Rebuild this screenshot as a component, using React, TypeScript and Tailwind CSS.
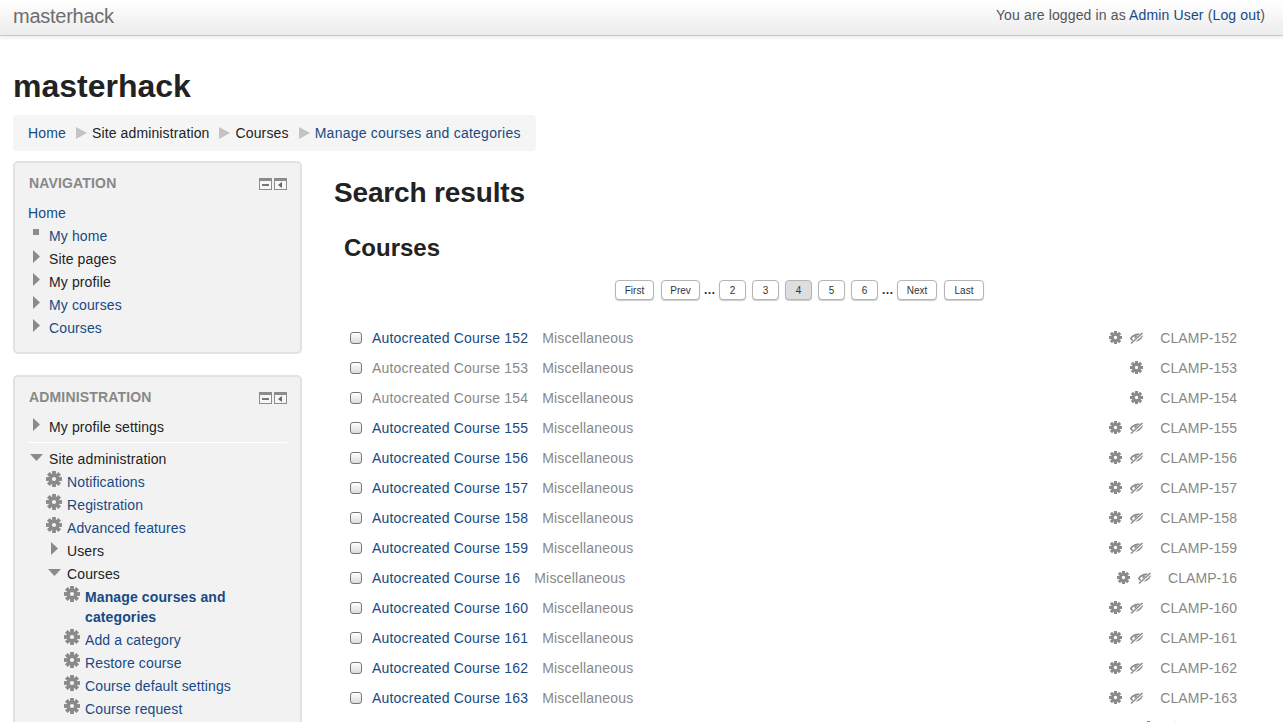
import React from 'react';

const LINK = 'text-[#174a85]';

type IconKind = 'none' | 'bullet' | 'closed' | 'open' | 'gear';

interface TreeItem {
  label: string;
  level: 1 | 2 | 3 | 0;
  icon: IconKind;
  link?: boolean;
  bold?: boolean;
}

const navItems: TreeItem[] = [
  { label: 'Home', level: 0, icon: 'none', link: true },
  { label: 'My home', level: 1, icon: 'bullet', link: true },
  { label: 'Site pages', level: 1, icon: 'closed' },
  { label: 'My profile', level: 1, icon: 'closed' },
  { label: 'My courses', level: 1, icon: 'closed', link: true },
  { label: 'Courses', level: 1, icon: 'closed', link: true },
];

const adminItems: TreeItem[] = [
  { label: 'Site administration', level: 1, icon: 'open' },
  { label: 'Notifications', level: 2, icon: 'gear', link: true },
  { label: 'Registration', level: 2, icon: 'gear', link: true },
  { label: 'Advanced features', level: 2, icon: 'gear', link: true },
  { label: 'Users', level: 2, icon: 'closed' },
  { label: 'Courses', level: 2, icon: 'open' },
  { label: 'Manage courses and categories', level: 3, icon: 'gear', link: true, bold: true },
  { label: 'Add a category', level: 3, icon: 'gear', link: true },
  { label: 'Restore course', level: 3, icon: 'gear', link: true },
  { label: 'Course default settings', level: 3, icon: 'gear', link: true },
  { label: 'Course request', level: 3, icon: 'gear', link: true },
];

const courses = [
  { num: '152', visible: true },
  { num: '153', visible: false },
  { num: '154', visible: false },
  { num: '155', visible: true },
  { num: '156', visible: true },
  { num: '157', visible: true },
  { num: '158', visible: true },
  { num: '159', visible: true },
  { num: '16', visible: true },
  { num: '160', visible: true },
  { num: '161', visible: true },
  { num: '162', visible: true },
  { num: '163', visible: true },
];

// Chunky eight tooth gear, the hole stays see-through
function Gear({ size, className }: { size: number; className?: string }) {
  return (
    <svg className={className} width={size} height={size} viewBox="0 0 16 16" fill="currentColor">
      {[0, 45, 90, 135, 180, 225, 270, 315].map((a) => (
        <rect key={a} x="6.1" y="0" width="3.8" height="4" transform={`rotate(${a} 8 8)`} />
      ))}
      <circle cx="8" cy="8" r="3.7" fill="none" stroke="currentColor" strokeWidth="3.2" />
    </svg>
  );
}

function EyeOff() {
  return (
    <svg width="13" height="12" viewBox="0 0 13 12" fill="none" stroke="currentColor">
      <path d="M0.8 6.5 C3 3 6.5 2 10.5 2.5 C11.5 2.7 12 3.2 12.2 3.8 C10.5 8 6 10 2.5 8.5 Z" strokeWidth="1.7" />
      <circle cx="6.4" cy="5.6" r="2" fill="currentColor" stroke="none" />
      <path d="M1.5 11.5 L12.5 1.5" stroke="#ffffff" strokeWidth="2.8" />
      <path d="M1 11.5 L12.5 1" strokeWidth="1.4" />
    </svg>
  );
}

function TreeIcon({ kind }: { kind: IconKind }) {
  if (kind === 'bullet') return <span className="block w-[6px] h-[6px] ml-[5px] mt-[3px] bg-[#8c8c8c]" />;
  if (kind === 'closed') {
    return (
      <svg className="block ml-[5px] mt-[1px]" width="7" height="13" viewBox="0 0 7 13">
        <path d="M0 0 L7 6.5 L0 13 Z" fill="#8a8a8a" />
      </svg>
    );
  }
  if (kind === 'open') {
    return (
      <svg className="block ml-[2px] mt-[5px]" width="13" height="7" viewBox="0 0 13 7">
        <path d="M0 0 H13 L6.5 7 Z" fill="#8a8a8a" />
      </svg>
    );
  }
  if (kind === 'gear') return <Gear size={16} className="block mt-[-1px] text-[#8a8a8a]" />;
  return null;
}

function TreeRow({ item }: { item: TreeItem }) {
  const indent =
    item.level === 3 ? 'pl-[36px]' : item.level === 2 ? 'pl-[18px]' : '';
  return (
    <div className={`flex py-[1.5px] leading-5 tracking-[0.12px] ${indent}`}>
      {item.level > 0 && (
        <span className="w-[21px] shrink-0">
          <TreeIcon kind={item.icon} />
        </span>
      )}
      <span className={`${item.link ? LINK : 'text-[#222]'} ${item.bold ? 'font-bold' : ''}`}>{item.label}</span>
    </div>
  );
}

function BlockControls() {
  return (
    <div className="flex gap-[2px] mt-[1px]">
      <span className="flex items-center justify-center w-[13px] h-[12px] border border-t-[3px] border-[#8c8c8c] bg-[#f7f7f7]">
        <span className="w-[7px] h-[2px] bg-[#777]" />
      </span>
      <span className="flex items-center justify-center w-[13px] h-[12px] border border-t-[3px] border-[#8c8c8c] bg-[#f7f7f7]">
        <svg width="5" height="6" viewBox="0 0 5 6">
          <path d="M4 0 V6 L0 3 Z" fill="#666" />
        </svg>
      </span>
    </div>
  );
}

function Block({ title, children, className }: { title: string; children: React.ReactNode; className?: string }) {
  return (
    <div className={`border-2 border-[#e2e2e2] rounded-[5px] bg-[#f2f2f2] pt-[10px] pb-[13px] pl-[13px] pr-[13px] ${className ?? ''}`}>
      <div className="flex items-center justify-between h-5 mb-[8px]">
        <h2 className="pl-[1px] text-[14px] font-bold text-[#888] uppercase">{title}</h2>
        <BlockControls />
      </div>
      {children}
    </div>
  );
}

function Crumb() {
  return (
    <svg className="ml-[10px] mr-[5px]" width="11" height="12" viewBox="0 0 11 12">
      <path d="M0 0 L11 6 L0 12 Z" fill="#c4c4c4" />
    </svg>
  );
}

function PageButton({ label, className, active }: { label: string; className: string; active?: boolean }) {
  return (
    <span
      className={`flex items-center justify-center h-[20px] rounded-[4px] border border-[#b5b5b5] shadow-[0_1px_1px_rgba(0,0,0,0.2)] text-[10px] tracking-normal text-[#333] ${className} ${
        active ? 'bg-[#dedede]' : 'bg-white'
      }`}
    >
      {label}
    </span>
  );
}

function CourseRow({ num, visible }: { num: string; visible: boolean }) {
  return (
    <div className="flex items-center h-[30px] pl-[6px] pr-[33px] tracking-[0.2px]">
      <span className="w-[12px] h-[12px] rounded-[3px] border border-[#777] bg-gradient-to-b from-white to-[#dcdcdc] mr-[10px]" />
      <span className={visible ? LINK : 'text-[#888]'}>Autocreated Course {num}</span>
      <span className="ml-[14px] text-[#888]">Miscellaneous</span>
      <span className="ml-auto flex items-center gap-[8px] text-[#8a8a8a] mt-[-1px]">
        <Gear size={13} />
        {visible && <EyeOff />}
      </span>
      <span className="ml-[17px] tracking-[0.05px] text-[#888]">CLAMP-{num}</span>
    </div>
  );
}

export default function App() {
  return (
    <div className="h-[722px] overflow-hidden bg-white text-[14px] tracking-[0.16px] font-['Liberation_Sans',sans-serif]">
      <header className="flex items-center justify-between h-[36px] pl-[13px] pr-[18px] pb-[4px] border-b border-[#c8c8c8] bg-gradient-to-b from-white to-[#ececec] shadow-[0_2px_4px_rgba(0,0,0,0.08)]">
        <span className="text-[20px] tracking-[-0.25px] text-[#6e6e6e]">masterhack</span>
        <span className="tracking-[0.14px] text-[#555]">
          You are logged in as <span className={LINK}>Admin User</span> (<span className={LINK}>Log out</span>)
        </span>
      </header>

      <div className="px-[13px]">
        <h1 className="mt-[30px] text-[32px] leading-10 tracking-normal font-bold text-[#222]">masterhack</h1>

        <nav className="inline-flex items-center h-[36px] mt-[9px] px-[15px] rounded-[4px] bg-[#f5f5f5] align-top">
          <span className={LINK}>Home</span>
          <Crumb />
          <span className="tracking-[0.12px] text-[#222]">Site administration</span>
          <Crumb />
          <span className="text-[#222]">Courses</span>
          <Crumb />
          <span className={`tracking-[0.23px] ${LINK}`}>Manage courses and categories</span>
        </nav>

        <div className="flex mt-[10px]">
          <aside className="w-[289px] shrink-0">
            <Block title="Navigation">
              {navItems.map((item) => (
                <TreeRow key={item.label} item={item} />
              ))}
            </Block>
            <Block title="Administration" className="mt-[21px]">
              <TreeRow item={{ label: 'My profile settings', level: 1, icon: 'closed' }} />
              <div className="h-[1px] bg-white mt-[4px] mb-[4px]" />
              {adminItems.map((item) => (
                <TreeRow key={item.label + item.level} item={item} />
              ))}
            </Block>
          </aside>

          <main className="flex-1 ml-[32px]">
            <h2 className="mt-[12px] text-[28px] leading-10 tracking-[-0.15px] font-bold text-[#222]">Search results</h2>
            <div className="pl-[10px]">
              <h3 className="mt-[20px] text-[24px] leading-[30px] tracking-normal font-bold text-[#222]">Courses</h3>
              <div className="flex justify-center items-center mt-[17px] ml-[-15px]">
                <PageButton label="First" className="w-[39px]" />
                <span className="w-[7px]" />
                <PageButton label="Prev" className="w-[39px]" />
                <span className="w-[19px] text-center text-[12px] font-bold leading-none text-[#333]">…</span>
                <div className="flex gap-[6px]">
                  <PageButton label="2" className="w-[27px]" />
                  <PageButton label="3" className="w-[27px]" />
                  <PageButton label="4" className="w-[27px]" active />
                  <PageButton label="5" className="w-[27px]" />
                  <PageButton label="6" className="w-[27px]" />
                </div>
                <span className="w-[19px] text-center text-[12px] font-bold leading-none text-[#333]">…</span>
                <PageButton label="Next" className="w-[40px]" />
                <span className="w-[7px]" />
                <PageButton label="Last" className="w-[40px]" />
              </div>
              <div className="mt-[23px]">
                {courses.map((c) => (
                  <CourseRow key={c.num} num={c.num} visible={c.visible} />
                ))}
              </div>
              {/* next row is below the fold, only the tips of its icons show */}
              <div className="flex justify-end gap-[8px] pt-[8px] pr-[94px] text-[#8a8a8a]">
                <Gear size={13} />
                <EyeOff />
              </div>
            </div>
          </main>
        </div>
      </div>
    </div>
  );
}
